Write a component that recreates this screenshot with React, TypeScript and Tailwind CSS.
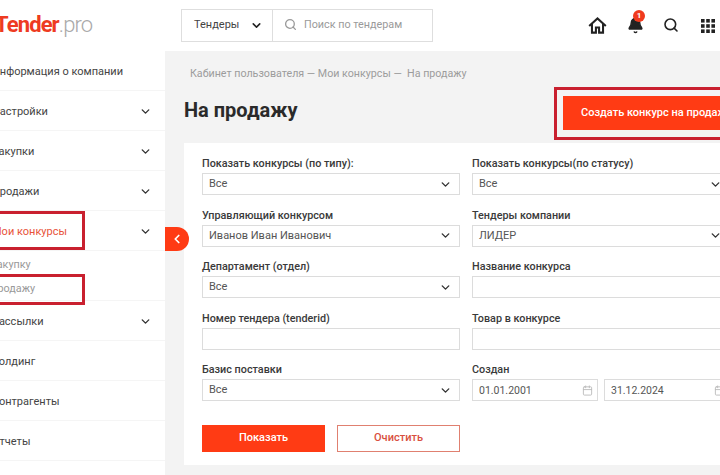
import React from 'react';
import { ChevronDown, ChevronLeft, Search, Bell, Calendar } from 'lucide-react';

const MENU_TOP = ['Информация о компании', 'Настройки', 'Закупки', 'Продажи'];
const MENU_BOTTOM = ['Рассылки', 'Холдинг', 'Контрагенты', 'Отчеты'];
const NO_CHEVRON = ['Информация о компании', 'Холдинг', 'Контрагенты', 'Отчеты'];

const MenuItem: React.FC<{ label: string; active?: boolean }> = ({ label, active }) => (
    <div className="h-10 flex items-center justify-between pl-[2px] pr-[13px] border-b border-[#f5f5f5]">
        <span className={active ? 'text-[#e8533a] mt-[3px]' : 'text-[#444] mt-[3px]'}>{label}</span>
        {!NO_CHEVRON.includes(label) && <ChevronDown size={13} strokeWidth={2.6} className="text-[#333] mt-[2px]" />}
    </div>
);

const Field: React.FC<{ label: string; children: React.ReactNode }> = ({ label, children }) => (
    <div className="flex flex-col h-[51.5px]">
        <label className="h-[18px] pt-[1px] leading-[16px] text-[10.8px] font-medium text-[#3a3a3a]">{label}</label>
        {children}
    </div>
);

const Select: React.FC<{ value: string }> = ({ value }) => (
    <div className="h-[22px] border border-[#dcdcdc] bg-white flex items-center justify-between pl-[6px] pr-[7px] text-[11px] text-[#555]">
        <span className="mt-[1px]">{value}</span>
        <ChevronDown size={13} strokeWidth={2.6} className="text-[#333]" />
    </div>
);

const Input: React.FC = () => <div className="h-[22px] border border-[#dcdcdc] bg-white" />;

const DateInput: React.FC<{ value: string }> = ({ value }) => (
    <div className="h-[22px] w-[126px] border border-[#dcdcdc] bg-white flex items-center justify-between pl-[6px] pr-[4px] text-[10.5px] text-[#555]">
        <span className="mt-[1px]">{value}</span>
        <Calendar size={11} className="text-[#bbb]" />
    </div>
);

export default function App() {
    return (
        <div className="relative w-[720px] h-[475px] overflow-hidden bg-white font-['Roboto',sans-serif]">
            {/* шапка */}
            <header className="h-[51px] flex items-center bg-white">
                <div className="w-[181px] shrink-0 -ml-[5px] mr-[5px] text-[22px] leading-none tracking-[-0.9px] -mt-[1px]">
                    <span className="font-bold text-[#ee3b22]">Tender</span>
                    <span className="font-light text-[#a9a9a9]">.pro</span>
                </div>
                <div className="h-[33px] w-[92px] border border-[#dedede] flex items-center justify-between pl-[12px] pr-[9px] text-[11px] text-[#444]">
                    <span>Тендеры</span>
                    <ChevronDown size={13} strokeWidth={2.8} className="text-[#222]" />
                </div>
                <div className="h-[33px] w-[160px] border border-l-0 border-[#dedede] flex items-center gap-[7px] pl-[11px] text-[10.8px] text-[#9a9a9a]">
                    <Search size={13} strokeWidth={2.4} className="text-[#999] -mt-[3px]" />
                    <span>Поиск по тендерам</span>
                </div>
                <div className="flex items-center ml-[156px] gap-[19px]">
                    <svg width="19" height="19" viewBox="0 0 24 24" fill="none" stroke="#222" strokeWidth="2.6" strokeLinejoin="miter" className="-ml-[1px]">
                        <path d="M1.5 12.5 L12 3 L22.5 12.5" />
                        <path d="M5 10 V21 H10 V14.5 H14 V21 H19 V10" />
                    </svg>
                    <div className="relative ml-[1px]">
                        <Bell size={17} fill="#222" className="text-[#222]" />
                        <span className="absolute -top-[7px] left-[6px] w-[12px] h-[12px] rounded-full bg-[#f03a1e] text-white text-[8px] font-bold flex items-center justify-center">1</span>
                    </div>
                    <Search size={16} strokeWidth={2.4} className="text-[#222] -mt-[1px]" />
                    <svg width="14" height="14" viewBox="0 0 14 14" className="ml-[3px]" fill="#222">
                        <rect x="0" y="0" width="3.6" height="3.6" /><rect x="5.2" y="0" width="3.6" height="3.6" /><rect x="10.4" y="0" width="3.6" height="3.6" />
                        <rect x="0" y="5.2" width="3.6" height="3.6" /><rect x="5.2" y="5.2" width="3.6" height="3.6" /><rect x="10.4" y="5.2" width="3.6" height="3.6" />
                        <rect x="0" y="10.4" width="3.6" height="3.6" /><rect x="5.2" y="10.4" width="3.6" height="3.6" /><rect x="10.4" y="10.4" width="3.6" height="3.6" />
                    </svg>
                </div>
            </header>

            <div className="flex h-[424px]">
                {/* боковое меню */}
                <aside className="relative w-[175px] shrink-0 -ml-[10px] bg-white text-[11px]">
                    {MENU_TOP.map(label => <MenuItem key={label} label={label} />)}
                    <MenuItem label="Мои конкурсы" active />
                    <div className="h-[50px] pt-[2px] text-[10.8px] text-[#999] border-b border-[#f5f5f5]">
                        <div className="h-6 leading-6 -ml-[15px]">На закупку</div>
                        <div className="h-6 leading-6 -ml-[15px]">На продажу</div>
                    </div>
                    {MENU_BOTTOM.map(label => <MenuItem key={label} label={label} />)}

                    <div className="absolute left-0 top-[160px] w-[95px] h-[39px] border-[3px] border-[#c9202f]" />
                    <div className="absolute left-0 top-[223px] w-[95px] h-[31px] border-[3px] border-[#c9202f]" />
                    <button className="absolute left-[175px] top-[176px] w-[24px] h-[24px] rounded-r-[12px] bg-[#ff3b14] text-white flex items-center justify-center">
                        <ChevronLeft size={14} strokeWidth={3} />
                    </button>
                </aside>

                {/* контент */}
                <main className="flex-1 min-w-0 bg-[#f3f3f3] pl-[19px]">
                    <div className="pl-[6px] pt-[15px] h-[36px] text-[10.7px] text-[#9c9c9c] whitespace-nowrap">
                        Кабинет пользователя — Мои конкурсы —&nbsp; На продажу
                    </div>
                    <div className="flex h-[56px] w-[640px]">
                        <h1 className="w-[370px] shrink-0 pt-[10px] text-[20px] leading-[26px] font-bold text-[#2a2a2a]">На продажу</h1>
                        <div className="h-[53px] w-[240px] border-[3px] border-[#c9202f] pl-[6px] pt-[6px]">
                            <button className="h-[34px] w-[220px] bg-[#ff3b14] text-white text-[11px] font-medium text-left pl-[18px] whitespace-nowrap">
                                Создать конкурс на продажу
                            </button>
                        </div>
                    </div>
                    <section className="w-[564px] h-[322px] bg-white px-[18px] pt-[12px]">
                        <div className="grid grid-cols-[258px_258px] gap-x-[12px]">
                            <Field label="Показать конкурсы (по типу):"><Select value="Все" /></Field>
                            <Field label="Показать конкурсы(по статусу)"><Select value="Все" /></Field>
                            <Field label="Управляющий конкурсом"><Select value="Иванов Иван Иванович" /></Field>
                            <Field label="Тендеры компании"><Select value="ЛИДЕР" /></Field>
                            <Field label="Департамент (отдел)"><Select value="Все" /></Field>
                            <Field label="Название конкурса"><Input /></Field>
                            <Field label="Номер тендера (tenderid)"><Input /></Field>
                            <Field label="Товар в конкурсе"><Input /></Field>
                            <Field label="Базис поставки"><Select value="Все" /></Field>
                            <Field label="Создан">
                                <div className="flex gap-[6px]">
                                    <DateInput value="01.01.2001" />
                                    <DateInput value="31.12.2024" />
                                </div>
                            </Field>
                        </div>
                        <div className="flex gap-[12px] mt-[12px]">
                            <button className="w-[123px] h-[27px] bg-[#ff3b14] text-white text-[11px] font-medium">Показать</button>
                            <button className="w-[123px] h-[27px] border border-[#e08070] text-[#d9503e] text-[11px] font-medium">Очистить</button>
                        </div>
                    </section>
                </main>
            </div>
        </div>
    );
}
